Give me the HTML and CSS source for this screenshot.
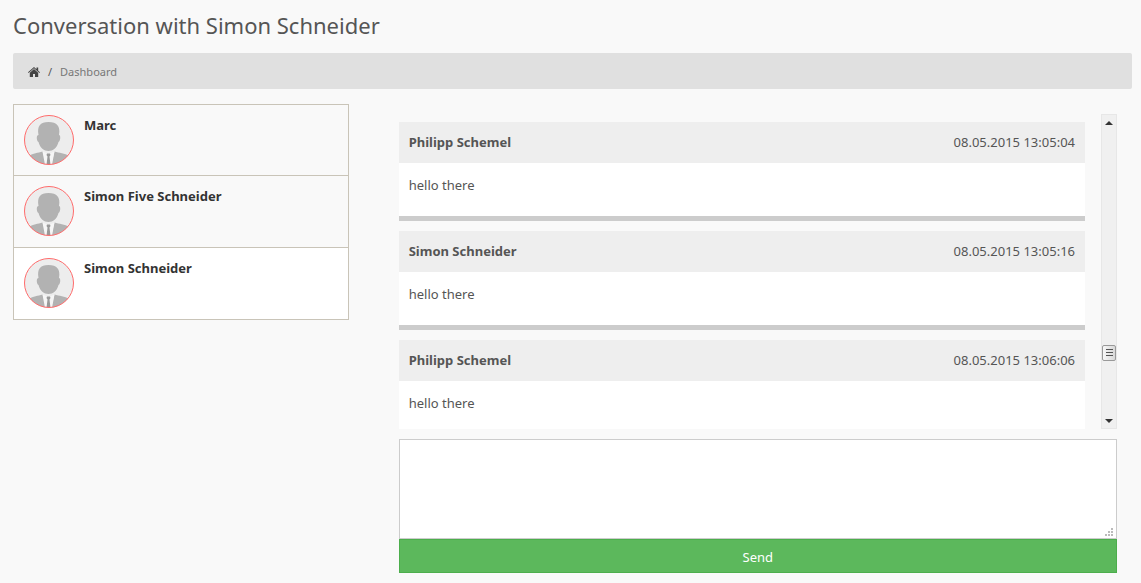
FILE: index.html
```html
<!DOCTYPE html>
<html lang="en">
<head>
<meta charset="utf-8">
<meta name="viewport" content="width=device-width, initial-scale=1">
<title>Conversation with Simon Schneider</title>
<link rel="stylesheet" href="styles.css">
</head>
<body>
<svg class="defs" aria-hidden="true">
  <symbol id="avatar" viewBox="0 0 50 50">
    <circle cx="25" cy="25" r="24.5" fill="#ededed"/>
    <clipPath id="round"><circle cx="25" cy="25" r="24.5"/></clipPath>
    <g clip-path="url(#round)" fill="#b2b2b2">
      <path d="M14.5 20C13 11 16 7 24.500 7S36.500 11 35 20C37 20 36.500 26 34.500 27C33 33 29 36 24.500 36S16 33 14.500 27C12.500 26 12 20 14.500 20Z"/>
      <path d="M5 41C9 38 14 38 18.500 36.500L23 50H0ZM45 41C41 38 35 38 30.500 36.500L27 50H50Z"/>
      <path d="M18.500 36.500L24.500 39L30.500 36.500L28 50H21Z" fill="#f6f6f6"/>
      <path d="M23 38.500H26L26.500 40L25.500 41.500L26.500 50H22.500L23.500 41.500L22.500 40Z" fill="#999"/>
    </g>
    <circle cx="25" cy="25" r="24.5" fill="none" stroke="#ff6b6b"/>
  </symbol>
</svg>
<main class="page">
  <h1 class="title">Conversation with Simon Schneider</h1>
  <nav class="breadcrumb" aria-label="Breadcrumb">
    <a class="home" href="#" aria-label="Home"><svg viewBox="0 0 12 10"><path d="M6 0L8.500 2.200V.5H10.200V3.700L12 5.300L11.400 6L6 1.300L.6 6L0 5.300ZM6 2.100L10.200 5.800V10H7V7H5V10H1.800V5.800Z" fill="#444"/></svg></a>
    <span class="slash">/</span>
    <a class="crumb" href="#">Dashboard</a>
  </nav>
  <div class="columns">
    <ul class="contacts">
      <li><a class="contact first" href="#"><svg class="avatar"><use href="#avatar"/></svg><span>Marc</span></a></li>
      <li><a class="contact" href="#"><svg class="avatar"><use href="#avatar"/></svg><span>Simon Five Schneider</span></a></li>
      <li><a class="contact active" href="#"><svg class="avatar"><use href="#avatar"/></svg><span>Simon Schneider</span></a></li>
    </ul>
    <section class="chat">
      <div class="history">
        <div class="messages">
          <article class="message">
            <header class="meta"><strong>Philipp Schemel</strong><time>08.05.2015 13:05:04</time></header>
            <p class="text">hello there</p>
          </article>
          <article class="message">
            <header class="meta"><strong>Simon Schneider</strong><time>08.05.2015 13:05:16</time></header>
            <p class="text">hello there</p>
          </article>
          <article class="message">
            <header class="meta"><strong>Philipp Schemel</strong><time>08.05.2015 13:06:06</time></header>
            <p class="text">hello there</p>
          </article>
        </div>
        <div class="scrollbar" aria-hidden="true">
          <svg class="arrow" viewBox="0 0 8 4"><path d="M4 0L8 4H0Z" fill="#333"/></svg>
          <span class="track-above"></span>
          <span class="thumb"><svg viewBox="0 0 7 8"><path d="M0 .5H7M0 3.500H7M0 6.500H7" stroke="#555"/></svg></span>
          <span class="track-below"></span>
          <svg class="arrow" viewBox="0 0 8 4"><path d="M0 0H8L4 4Z" fill="#333"/></svg>
        </div>
      </div>
      <form class="reply">
        <div class="field">
          <textarea class="input" aria-label="Message"></textarea>
          <svg class="grip" viewBox="0 0 8 8" aria-hidden="true"><path d="M6 0H8V2H6ZM3 3H5V5H3ZM6 3H8V5H6ZM0 6H2V8H0ZM3 6H5V8H3ZM6 6H8V8H6Z" fill="#bbb"/></svg>
        </div>
        <button class="send" type="button">Send</button>
      </form>
    </section>
  </div>
</main>
</body>
</html>
```
FILE: styles.css
```css
* { box-sizing: border-box; }
body {
  margin: 0;
  background: #f9f9f9;
  color: #555;
  font: 13px/20px "Noto Sans", sans-serif;
}
a { color: inherit; text-decoration: none; }
.defs { position: absolute; width: 0; height: 0; }
.page { padding: 10px 9px 10px 13px; }
.title {
  margin: 0 0 13px;
  font-size: 22px;
  line-height: 30px;
  font-weight: 400;
}
.breadcrumb {
  display: flex;
  align-items: center;
  gap: 8px;
  height: 36px;
  padding: 1px 15px 0;
  background: #e0e0e0;
  border-radius: 2px;
  font-size: 11px;
}
.home { display: flex; }
.home svg { width: 12px; height: 10px; }
.crumb { color: #777; }
.columns {
  display: flex;
  align-items: flex-start;
  gap: 50px;
  margin-top: 15px;
}
.contacts {
  flex: 0 0 30%;
  margin: 0;
  padding: 0;
  list-style: none;
  border: 1px solid #c9c4b8;
}
.contacts li + li { border-top: 1px solid #c9c4b8; }
.contact {
  display: flex;
  gap: 10px;
  padding: 10px 10px 11px;
  color: #333;
  font-weight: 700;
}
.contact.first { padding-bottom: 10px; }
.contact.active { background: #fff; }
.avatar { flex: none; width: 50px; height: 50px; }
.chat { flex: 1; min-width: 0; padding: 10px 15px 0 0; }
.history { display: flex; gap: 16px; height: 315px; }
.messages {
  flex: 1;
  display: flex;
  flex-direction: column;
  gap: 10px;
  padding-top: 8px;
  overflow: hidden;
}
.message { flex: none; background: #fff; border-bottom: 5px solid #ccc; }
.meta {
  display: flex;
  justify-content: space-between;
  padding: 10px 10px 11px;
  background: #eee;
}
.text { margin: 0; padding: 12px 10px 21px; }
.scrollbar {
  display: flex;
  flex-direction: column;
  align-items: center;
  width: 16px;
  padding: 6px 0 5px;
  background: #f0f0f0;
  border: 1px solid #e7e7e7;
}
.arrow { flex: none; width: 8px; height: 4px; }
.track-above { flex: 220; }
.track-below { flex: 58; }
.thumb {
  display: grid;
  place-items: center;
  flex: none;
  width: 14px;
  height: 16px;
  background: linear-gradient(90deg, #f8f8f8, #d8d8d8);
  border: 1px solid #999;
  border-radius: 2px;
}
.thumb svg { width: 7px; height: 8px; }
.reply { margin-top: 10px; }
.field { position: relative; display: flex; }
.input {
  width: 100%;
  height: 100px;
  padding: 6px 10px;
  color: inherit;
  font: inherit;
  background: #fff;
  border: 1px solid #ccc;
  border-radius: 0;
  resize: none;
}
.grip { position: absolute; right: 4px; bottom: 3px; width: 8px; height: 8px; }
.send {
  display: block;
  width: 100%;
  padding: 7px 12px 5px;
  color: #fff;
  font: inherit;
  background: #5cb85c;
  border: 1px solid #4cae4c;
}
```
